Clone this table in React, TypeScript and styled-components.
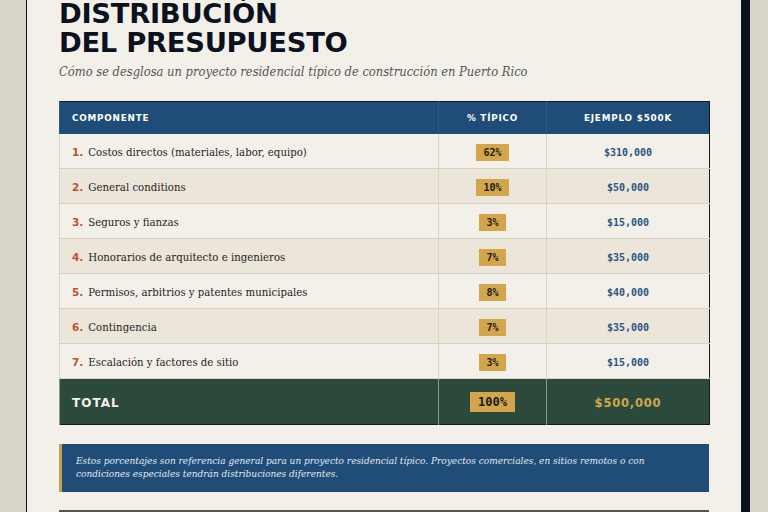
import styled, { createGlobalStyle } from 'styled-components';

interface Row {
    label: string;
    pct: string;
    amount: string;
}

const rows: Row[] = [
    { label: 'Costos directos (materiales, labor, equipo)', pct: '62%', amount: '$310,000' },
    { label: 'General conditions', pct: '10%', amount: '$50,000' },
    { label: 'Seguros y fianzas', pct: '3%', amount: '$15,000' },
    { label: 'Honorarios de arquitecto e ingenieros', pct: '7%', amount: '$35,000' },
    { label: 'Permisos, arbitrios y patentes municipales', pct: '8%', amount: '$40,000' },
    { label: 'Contingencia', pct: '7%', amount: '$35,000' },
    { label: 'Escalación y factores de sitio', pct: '3%', amount: '$15,000' },
];

const GlobalStyle = createGlobalStyle`
    html, body {
        margin: 0;
        background: #d9d5ca;
    }
`;

const Page = styled.div`
    padding: 1px 26px 0;
`;

const Card = styled.div`
    margin-top: -21px;
    background: #f3f0e9;
    border: 1px solid #0c1120;
    box-shadow: 8px 8px 0 #0c1120;
    padding: 0 32px 40px;
`;

const Title = styled.h1`
    margin: 19px 0 0;
    font-family: 'DejaVu Sans', sans-serif;
    font-weight: 700;
    font-size: 27.4px;
    line-height: 28.5px;
    letter-spacing: -0.3px;
    color: #0c1120;
`;

const Subtitle = styled.p`
    margin: 7px 0 0;
    font-family: 'DejaVu Serif', serif;
    font-stretch: condensed;
    font-style: italic;
    font-size: 12.8px;
    color: #555;
`;

const Table = styled.table`
    margin-top: 22px;
    width: 650px;
    border-collapse: collapse;
    border: 1.5px solid #16191f;
    table-layout: fixed;
`;

const HeadCell = styled.th<{ align?: string }>`
    background: #1f4d78;
    color: #fff;
    height: 32px;
    padding: 0 12px;
    font-family: 'DejaVu Sans', sans-serif;
    font-size: 8.8px;
    font-weight: 700;
    letter-spacing: 0.8px;
    text-align: ${(p) => p.align || 'center'};
    border-left: 1px solid #2d5a85;
`;

const BodyRow = styled.tr<{ shade?: boolean }>`
    background: ${(p) => (p.shade ? '#ebe5da' : '#f3f0e9')};
    border-bottom: 1px solid #d9d2c4;
`;

const Cell = styled.td<{ align?: string }>`
    height: 34px;
    padding: 0 12px;
    text-align: ${(p) => p.align || 'center'};
    border-left: 1px solid #d9d2c4;
    vertical-align: middle;
`;

const Num = styled.span`
    font-family: 'DejaVu Sans', sans-serif;
    font-weight: 700;
    font-size: 10.5px;
    color: #c0502f;
    margin-right: 5px;
`;

const Label = styled.span`
    font-family: 'DejaVu Serif', serif;
    font-stretch: condensed;
    font-size: 11.3px;
    color: #1f1f1f;
`;

const Badge = styled.span<{ big?: boolean }>`
    display: inline-block;
    background: #d4a64b;
    color: #1a1a1a;
    font-family: 'DejaVu Sans Mono', monospace;
    font-weight: 700;
    font-size: ${(p) => (p.big ? '12px' : '10px')};
    line-height: ${(p) => (p.big ? '20px' : '17px')};
    padding: 0 ${(p) => (p.big ? '8px' : '7px')};
`;

const Amount = styled.span`
    font-family: 'DejaVu Sans Mono', monospace;
    font-weight: 700;
    font-size: 10px;
    color: #2c5582;
`;

const TotalRow = styled.tr`
    background: #2b4a3b;
    border-top: 1.5px solid #16191f;
`;

const TotalCell = styled.td<{ align?: string }>`
    height: 45px;
    padding: 0 12px;
    text-align: ${(p) => p.align || 'center'};
    border-left: 1px solid #8a9a8a;
`;

const TotalLabel = styled.span`
    font-family: 'DejaVu Sans', sans-serif;
    font-weight: 700;
    font-size: 12px;
    letter-spacing: 1px;
    color: #f3f0e9;
`;

const TotalAmount = styled.span`
    font-family: 'DejaVu Sans', sans-serif;
    font-weight: 700;
    font-size: 11.5px;
    letter-spacing: 0.8px;
    color: #d4a64b;
`;

const Note = styled.div`
    margin-top: 19px;
    background: #1f4d78;
    border-left: 3px solid #c9a04a;
    padding: 11px 58px 12px 14px;
    font-family: 'DejaVu Serif', serif;
    font-stretch: condensed;
    font-style: italic;
    font-size: 10px;
    line-height: 12.5px;
    color: #e4e9ef;
`;

const NextBlock = styled.div`
    margin-top: 18px;
    height: 80px;
    border-top: 2px solid #555;
`;

const App = () => {
    return (
        <Page>
            <GlobalStyle />
            <Card>
                <Title>
                    DISTRIBUCIÓN
                    <br />
                    DEL PRESUPUESTO
                </Title>
                <Subtitle>Cómo se desglosa un proyecto residencial típico de construcción en Puerto Rico</Subtitle>
                <Table>
                    <colgroup>
                        <col style={{ width: 379 }} />
                        <col style={{ width: 108 }} />
                        <col style={{ width: 163 }} />
                    </colgroup>
                    <thead>
                        <tr>
                            <HeadCell align='left'>COMPONENTE</HeadCell>
                            <HeadCell>% TÍPICO</HeadCell>
                            <HeadCell>EJEMPLO $500K</HeadCell>
                        </tr>
                    </thead>
                    <tbody>
                        {rows.map((row, i) => (
                            <BodyRow key={row.label} shade={i % 2 === 1}>
                                <Cell align='left'>
                                    <Num>{i + 1}.</Num>
                                    <Label>{row.label}</Label>
                                </Cell>
                                <Cell>
                                    <Badge>{row.pct}</Badge>
                                </Cell>
                                <Cell>
                                    <Amount>{row.amount}</Amount>
                                </Cell>
                            </BodyRow>
                        ))}
                        <TotalRow>
                            <TotalCell align='left'>
                                <TotalLabel>TOTAL</TotalLabel>
                            </TotalCell>
                            <TotalCell>
                                <Badge big>100%</Badge>
                            </TotalCell>
                            <TotalCell>
                                <TotalAmount>$500,000</TotalAmount>
                            </TotalCell>
                        </TotalRow>
                    </tbody>
                </Table>
                <Note>
                    Estos porcentajes son referencia general para un proyecto residencial típico. Proyectos comerciales, en sitios remotos o con
                    condiciones especiales tendrán distribuciones diferentes.
                </Note>
                <NextBlock />
            </Card>
        </Page>
    );
};

export default App;
